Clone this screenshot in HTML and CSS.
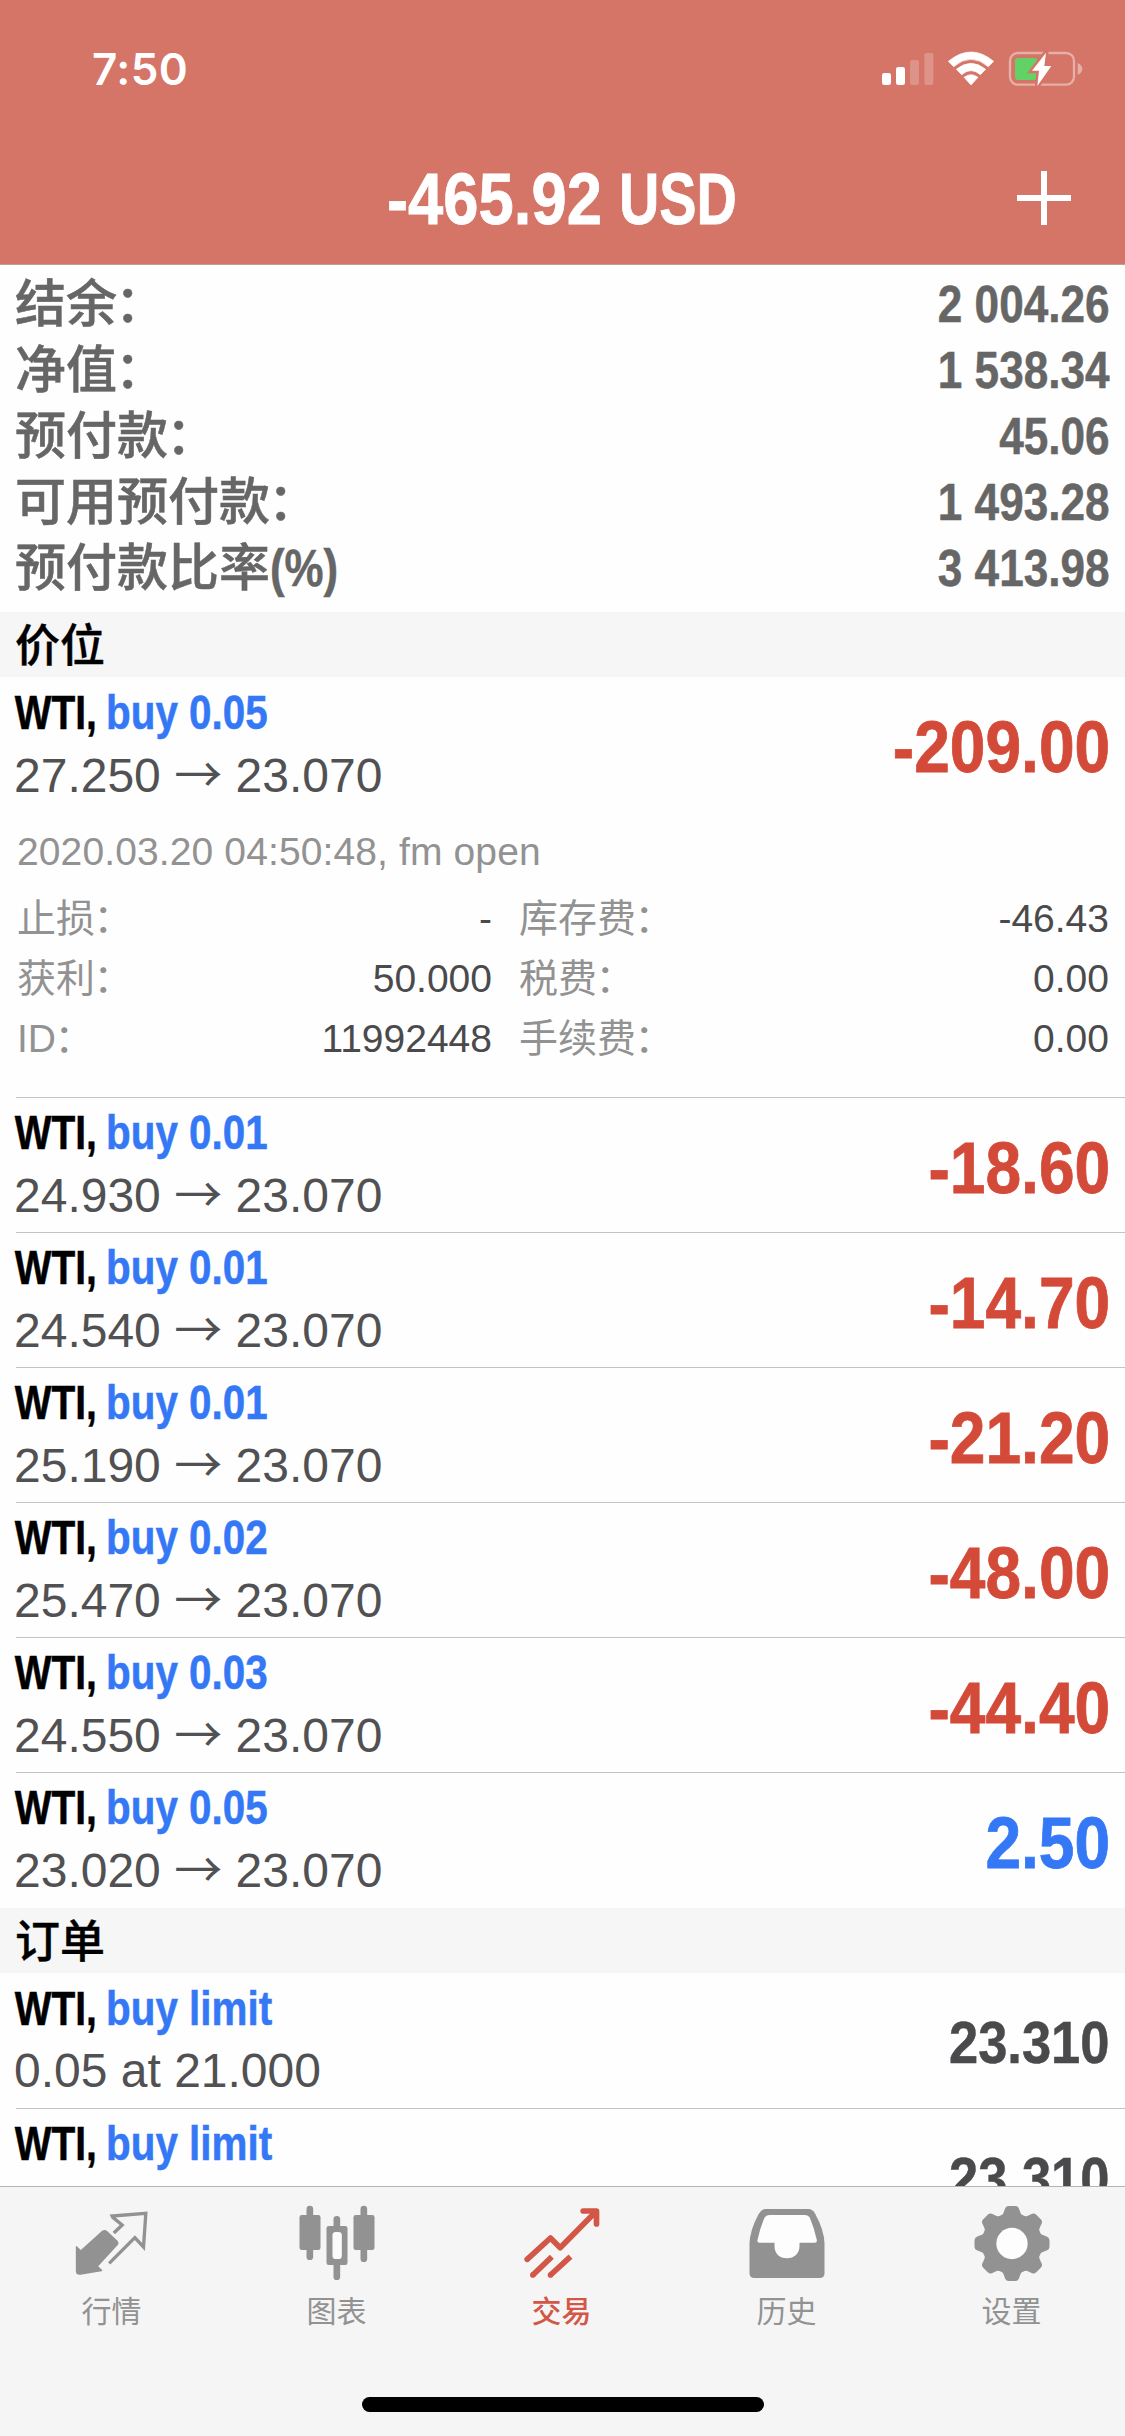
FILE: index.html
```html
<!DOCTYPE html>
<html lang="zh-CN">
<head>
<meta charset="utf-8">
<title>交易</title>
<link rel="stylesheet" href="styles.css">
</head>
<body>
<div class="screen">
  <header class="header">
    <div class="status">
      <span class="time">7:50</span>
      <svg class="status-icons" viewBox="60 60 612 114" aria-hidden="true">
        <g fill="#fff">
          <rect x="66" y="129" width="27" height="36" rx="7"/>
          <rect x="108" y="111" width="27" height="54" rx="7"/>
          <g opacity=".22">
            <rect x="150" y="90" width="27" height="75" rx="7"/>
            <rect x="193" y="69" width="27" height="96" rx="7"/>
          </g>
          <path d="M265 94Q333 38 401 94L385 110Q333 66 281 110Z" stroke="#fff" stroke-width="2" stroke-linejoin="round"/>
          <path d="M289 118Q333 82 377 118L361 134Q333 110 305 134Z" stroke="#fff" stroke-width="2" stroke-linejoin="round"/>
          <path d="M312 142Q333 126 354 142L333 165Z" stroke="#fff" stroke-width="2" stroke-linejoin="round"/>
        </g>
        <g opacity=".42">
          <rect x="450" y="69" width="192" height="95" rx="23" fill="none" stroke="#fff" stroke-width="7"/>
          <path d="M653 99Q667 106 667 117T653 135Z" fill="#fff"/>
        </g>
        <rect x="465" y="84" width="68" height="66" rx="10" fill="#62d267"/>
        <path d="M558 68L516 122H537L532 168L574 108H553Z" fill="#fff" stroke="#d57568" stroke-width="15" paint-order="stroke"/>
      </svg>
    </div>
    <div class="nav">
      <h1 class="title"><span class="title-sum">-465.92</span><span class="title-cur">USD</span></h1>
      <svg class="plus" viewBox="0 0 54 54" aria-hidden="true"><path d="M27 0V54M0 27H54" stroke="#fff" stroke-width="6"/></svg>
    </div>
  </header>

  <main class="content">
    <dl class="summary">
      <div class="sum-row"><dt>结余<i class="colon">：</i></dt><dd>2 004.26</dd></div>
      <div class="sum-row"><dt>净值<i class="colon">：</i></dt><dd>1 538.34</dd></div>
      <div class="sum-row"><dt>预付款<i class="colon">：</i></dt><dd>45.06</dd></div>
      <div class="sum-row"><dt>可用预付款<i class="colon">：</i></dt><dd>1 493.28</dd></div>
      <div class="sum-row"><dt>预付款比率<span class="percent">(%)</span></dt><dd>3 413.98</dd></div>
    </dl>

    <h2 class="section">价位</h2>
    <ul class="list">
      <li class="item">
        <div class="row">
          <div class="info">
            <div class="deal"><span class="symbol">WTI,</span><span class="side">buy 0.05</span></div>
            <div class="price">27.250 <span class="arrow">→</span> 23.070</div>
          </div>
          <div class="amount loss">-209.00</div>
        </div>
        <div class="details">
          <div class="stamp">2020.03.20 04:50:48, fm open</div>
          <div class="grid">
            <div class="cell"><span>止损<i class="colon">：</i></span><b>-</b></div>
            <div class="cell"><span>库存费<i class="colon">：</i></span><b>-46.43</b></div>
            <div class="cell"><span>获利<i class="colon">：</i></span><b>50.000</b></div>
            <div class="cell"><span>税费<i class="colon">：</i></span><b>0.00</b></div>
            <div class="cell"><span>ID<i class="colon">：</i></span><b>11992448</b></div>
            <div class="cell"><span>手续费<i class="colon">：</i></span><b>0.00</b></div>
          </div>
        </div>
      </li>
      <li class="item"><div class="row"><div class="info"><div class="deal"><span class="symbol">WTI,</span><span class="side">buy 0.01</span></div><div class="price">24.930 <span class="arrow">→</span> 23.070</div></div><div class="amount loss">-18.60</div></div></li>
      <li class="item"><div class="row"><div class="info"><div class="deal"><span class="symbol">WTI,</span><span class="side">buy 0.01</span></div><div class="price">24.540 <span class="arrow">→</span> 23.070</div></div><div class="amount loss">-14.70</div></div></li>
      <li class="item"><div class="row"><div class="info"><div class="deal"><span class="symbol">WTI,</span><span class="side">buy 0.01</span></div><div class="price">25.190 <span class="arrow">→</span> 23.070</div></div><div class="amount loss">-21.20</div></div></li>
      <li class="item"><div class="row"><div class="info"><div class="deal"><span class="symbol">WTI,</span><span class="side">buy 0.02</span></div><div class="price">25.470 <span class="arrow">→</span> 23.070</div></div><div class="amount loss">-48.00</div></div></li>
      <li class="item"><div class="row"><div class="info"><div class="deal"><span class="symbol">WTI,</span><span class="side">buy 0.03</span></div><div class="price">24.550 <span class="arrow">→</span> 23.070</div></div><div class="amount loss">-44.40</div></div></li>
      <li class="item"><div class="row"><div class="info"><div class="deal"><span class="symbol">WTI,</span><span class="side">buy 0.05</span></div><div class="price">23.020 <span class="arrow">→</span> 23.070</div></div><div class="amount gain">2.50</div></div></li>
    </ul>

    <h2 class="section orders">订单</h2>
    <ul class="list">
      <li class="item"><div class="row"><div class="info"><div class="deal"><span class="symbol">WTI,</span><span class="side">buy limit</span></div><div class="price">0.05 at 21.000</div></div><div class="amount quote">23.310</div></div></li>
      <li class="item"><div class="row"><div class="info"><div class="deal"><span class="symbol">WTI,</span><span class="side">buy limit</span></div></div><div class="amount quote">23.310</div></div></li>
    </ul>
  </main>

  <footer class="footer">
    <nav class="tabs">
      <div class="tab">
        <svg viewBox="211.5 36 252 240" aria-hidden="true">
          <path d="M226 171Q226 167 229 169L241 180L304 123Q312 117 320 123L351 152Q357 159 351 166L293 229L305 240Q307 243 303 244L240 254Q226 256 226 244Z" fill="currentColor"/>
          <path d="M340 129L365 105L337 82L335 78L436 70L429 171L403 143L326 220" fill="none" stroke="currentColor" stroke-width="10"/>
        </svg>
        <span>行情</span>
      </div>
      <div class="tab">
        <svg viewBox="886.5 36 252 240" aria-hidden="true">
          <g fill="currentColor">
            <rect x="918" y="47" width="20" height="163" rx="10"/><rect x="897" y="75" width="63" height="105" rx="7"/>
            <rect x="1080" y="47" width="20" height="169" rx="10"/><rect x="1059" y="75" width="63" height="105" rx="7"/>
            <rect x="999" y="78" width="20" height="192" rx="10"/><rect x="978" y="108" width="63" height="117" rx="7"/>
          </g>
          <rect x="996" y="126" width="28" height="81" rx="10" fill="#fbfbfb"/>
        </svg>
        <span>图表</span>
      </div>
      <div class="tab active">
        <svg viewBox="421.5 36 252 240" aria-hidden="true">
          <g fill="none" stroke="currentColor" stroke-width="17">
            <path d="M440 208L510 144L539 173L645 66" stroke-linecap="round" stroke-linejoin="round"/>
            <path d="M608 63H648V102" stroke-linecap="round" stroke-linejoin="round"/>
            <path d="M457 255L514 200M510 255L570 200"/>
          </g>
          <circle cx="457" cy="255" r="8.5" fill="currentColor"/><circle cx="510" cy="255" r="8.5" fill="currentColor"/>
        </svg>
        <span>交易</span>
      </div>
      <div class="tab">
        <svg viewBox="76.5 36 252 240" aria-hidden="true">
          <path d="M135 57H264Q276 57 284 71Q311 120 312 160V250Q312 264 298 264H101Q87 264 87 250V160Q88 120 115 71Q123 57 135 57Z" fill="currentColor"/>
          <path d="M146 75H254Q264 75 268 83Q281 113 289 150Q290 158 283 158H237V168C237 190 222 205 199 205S162 190 162 168V158H117Q109 158 111 150Q119 113 132 83Q136 75 146 75Z" fill="#fdfdfd"/>
        </svg>
        <span>历史</span>
      </div>
      <div class="tab">
        <svg viewBox="751.5 36 252 240" aria-hidden="true">
          <g fill="currentColor">
            <circle cx="874.500" cy="160.500" r="91"/>
            <path id="cog" d="M835 82Q846 78 850 66L854 55Q857 48 865 48H884Q892 48 895 55L899 66Q903 78 914 82ZM835 239Q846 243 850 255L854 266Q857 273 865 273H884Q892 273 895 266L899 255Q903 243 914 239Z"/>
            <use href="#cog" transform="rotate(45 874.500 160.500)"/>
            <use href="#cog" transform="rotate(90 874.500 160.500)"/>
            <use href="#cog" transform="rotate(135 874.500 160.500)"/>
          </g>
          <circle cx="874.500" cy="160.500" r="47" fill="#fdfdfd"/>
        </svg>
        <span>设置</span>
      </div>
    </nav>
    <div class="home"></div>
  </footer>
</div>
</body>
</html>
```
FILE: styles.css
```css
* { box-sizing: border-box; margin: 0; padding: 0; }

body {
  width: 1125px;
  height: 2436px;
  overflow: hidden;
  background: #fefefe;
  font-family: "Liberation Sans", "Noto Sans CJK SC", sans-serif;
}

ul { list-style: none; }
.colon { font-style: normal; margin-left: -.04em; }

.screen { display: flex; flex-direction: column; height: 2436px; }

/* header */
.header {
  flex: none;
  height: 265px;
  background: #d57568;
  border-bottom: 1px solid #c1a09c;
  color: #fff;
}
.status {
  height: 132px;
  padding: 50px 41px 0 92px;
  display: flex;
  justify-content: space-between;
  align-items: flex-start;
}
.time { font: 600 44px/38px Inter, sans-serif; letter-spacing: .4px; }
.status-icons { width: 204px; height: 38px; }
.nav {
  height: 132px;
  display: grid;
  grid-template-columns: 1fr auto 1fr;
  align-items: center;
}
.title {
  grid-column: 2;
  display: flex;
  font-size: 72px;
  line-height: 80px;
  width: 351px;
  padding-top: 2px;
  -webkit-text-stroke: .8px currentColor;
}
.title-sum { width: 232px; transform: scaleX(.88); transform-origin: left; white-space: nowrap; }
.title-cur { width: 119px; transform: scaleX(.775); transform-origin: left; }
.plus { width: 54px; height: 54px; justify-self: end; margin-right: 54px; }

/* account summary */
.content { flex: 1; min-height: 0; overflow: hidden; }
.summary { height: 347px; padding: 7px 15px 0 15px; color: #666; }
.sum-row {
  display: flex;
  justify-content: space-between;
  height: 66px;
  font-size: 51px;
  line-height: 66px;
  -webkit-text-stroke: .5px currentColor;
}
.sum-row dt { font-weight: 500; }
.sum-row dd { font-weight: 700; transform: scaleX(.865); transform-origin: right; }
.percent { display: inline-block; font-weight: 700; transform: scaleX(.86); transform-origin: left; }

.section {
  height: 65px;
  padding: 2px 0 0 15px;
  background: #f6f6f6;
  font-size: 45px;
  font-weight: 500;
  line-height: 65px;
  color: #000;
  -webkit-text-stroke: .4px currentColor;
}
.orders { margin-top: 1px; }

/* positions and orders */
.item { margin-left: 16px; }
.item + .item .row { border-top: 1px solid #c3c3c5; }
.row {
  display: flex;
  justify-content: space-between;
  height: 135px;
  padding-right: 15px;
}
.info { margin-left: -2px; padding-top: 8px; display: flex; flex-direction: column; gap: 6px; }
.item + .item .info { padding-top: 7px; }
.deal {
  display: flex;
  height: 56px;
  font-size: 48px;
  font-weight: 700;
  line-height: 56px;
  -webkit-text-stroke: .5px currentColor;
}
.symbol { width: 92px; padding-left: 1px; color: #000; transform: scaleX(.81); transform-origin: left; }
.side { color: #3478f6; transform: scaleX(.842); transform-origin: left; white-space: nowrap; }
.price { height: 56px; font-size: 48px; line-height: 56px; color: #515153; white-space: nowrap; }
.arrow { font-family: "Noto Sans CJK SC", sans-serif; font-weight: 400; line-height: 1; }
.amount {
  align-self: center;
  padding-top: 5px;
  font-size: 72px;
  font-weight: 700;
  line-height: 80px;
  transform: scaleX(.89);
  transform-origin: right;
  -webkit-text-stroke: .8px currentColor;
}
.loss { color: #d44a38; }
.gain { color: #3478f6; }
.quote { color: #4a4a4c; font-size: 60px; transform: scaleX(.875); -webkit-text-stroke-width: .5px; }

.details { height: 285px; padding: 10px 15px 0 1px; font-size: 39px; line-height: 60px; color: #929292; }
.stamp { letter-spacing: .12px; }
.grid {
  display: grid;
  grid-template-columns: 475px 590px;
  column-gap: 27px;
  margin-top: 7px;
}
.cell { display: flex; justify-content: space-between; }
.cell b { font-weight: 400; color: #4a4a4c; }

/* tab bar */
.footer {
  flex: none;
  height: 250px;
  background: #f5f5f5;
  border-top: 1px solid #b4b4b4;
  display: flex;
  flex-direction: column;
  justify-content: space-between;
  align-items: center;
  padding-bottom: 24px;
}
.tabs { display: grid; grid-template-columns: repeat(5, 225px); padding-top: 15px; }
.tab { display: flex; flex-direction: column; align-items: center; color: #929292; }
.tab svg { width: 84px; height: 80px; }
.tab span { margin: 10px 2px 0 0; font-size: 30px; line-height: 40px; }
.active { color: #d25746; }
.active span { font-weight: 500; }
.home { width: 402px; height: 15px; border-radius: 8px; background: #000; }
```
